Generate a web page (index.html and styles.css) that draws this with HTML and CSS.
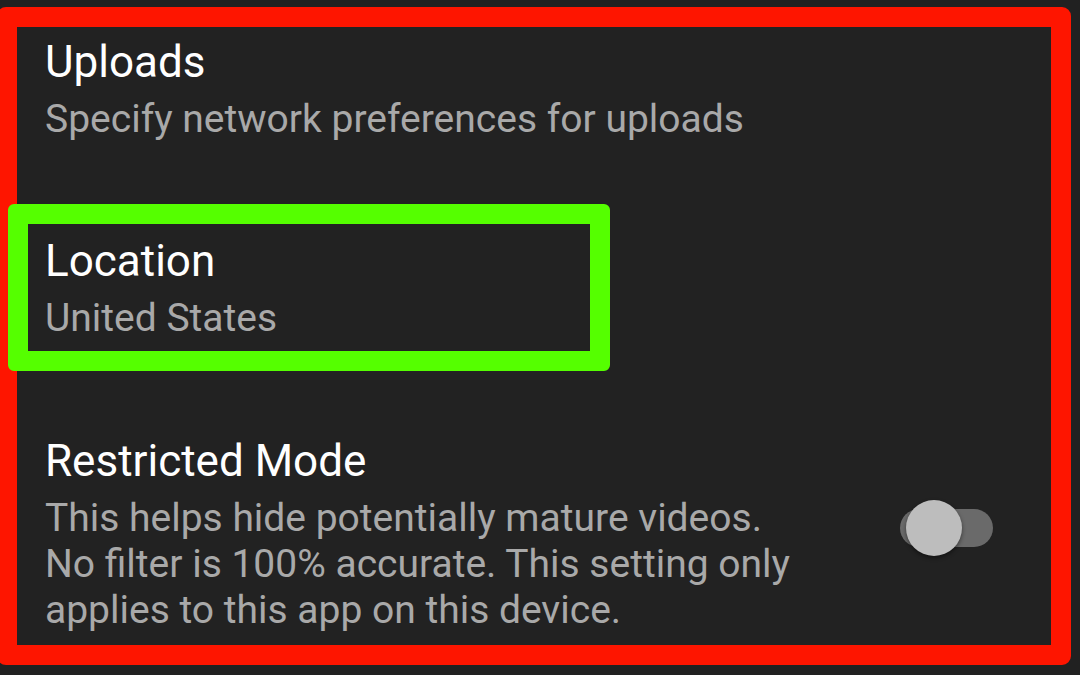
FILE: index.html
```html
<!DOCTYPE html>
<html lang="en">
<head>
<meta charset="utf-8">
<title>Settings</title>
<link rel="stylesheet" href="styles.css">
</head>
<body>
<div class="frame">
  <div class="item item-uploads">
    <div class="title">Uploads</div>
    <div class="sub">Specify network preferences for uploads</div>
  </div>
  <div class="item item-location">
    <div class="title">Location</div>
    <div class="sub">United States</div>
  </div>
  <div class="item item-restricted">
    <div class="text">
      <div class="title">Restricted Mode</div>
      <div class="sub">This helps hide potentially mature videos.<br>No filter is 100% accurate. This setting only<br>applies to this app on this device.</div>
    </div>
    <div class="switch"><span class="track"></span><span class="thumb"></span></div>
  </div>
</div>
</body>
</html>
```
FILE: styles.css
```css
html, body {
  margin: 0;
  padding: 0;
  background: #212121;
  width: 1080px;
  height: 675px;
  overflow: hidden;
  font-family: Roboto, "Noto Sans", sans-serif;
}
.frame {
  box-sizing: border-box;
  margin: 7px 0 0 -3px;
  width: 1074px;
  height: 658px;
  border: 20px solid #fe1500;
  border-radius: 9px;
  background: #222222;
  padding-top: 10px;
}
.item {
  padding-left: 28px;
}
.title {
  font-size: 44px;
  line-height: 50px;
  color: #ffffff;
}
.sub {
  font-size: 39px;
  line-height: 46px;
  margin-top: 9px;
  color: #a9a9a9;
}
.item-location {
  box-sizing: border-box;
  margin: 62px 0 0 -9px;
  width: 602px;
  border: 20px solid #55ff00;
  border-radius: 6px;
  padding: 12px 0 10px 17px;
}
.item-restricted {
  margin-top: 65px;
  display: flex;
  align-items: center;
  justify-content: space-between;
  padding-right: 58px;
}
.switch {
  position: relative;
  width: 93px;
  height: 56px;
  margin-top: -13px;
}
.track {
  position: absolute;
  left: 0;
  top: 9px;
  width: 93px;
  height: 38px;
  border-radius: 19px;
  background: #6a6a6a;
}
.thumb {
  position: absolute;
  left: 6px;
  top: 0;
  width: 56px;
  height: 56px;
  border-radius: 50%;
  background: #bdbdbd;
  box-shadow: 0 2px 4px rgba(0,0,0,0.45);
}
```
